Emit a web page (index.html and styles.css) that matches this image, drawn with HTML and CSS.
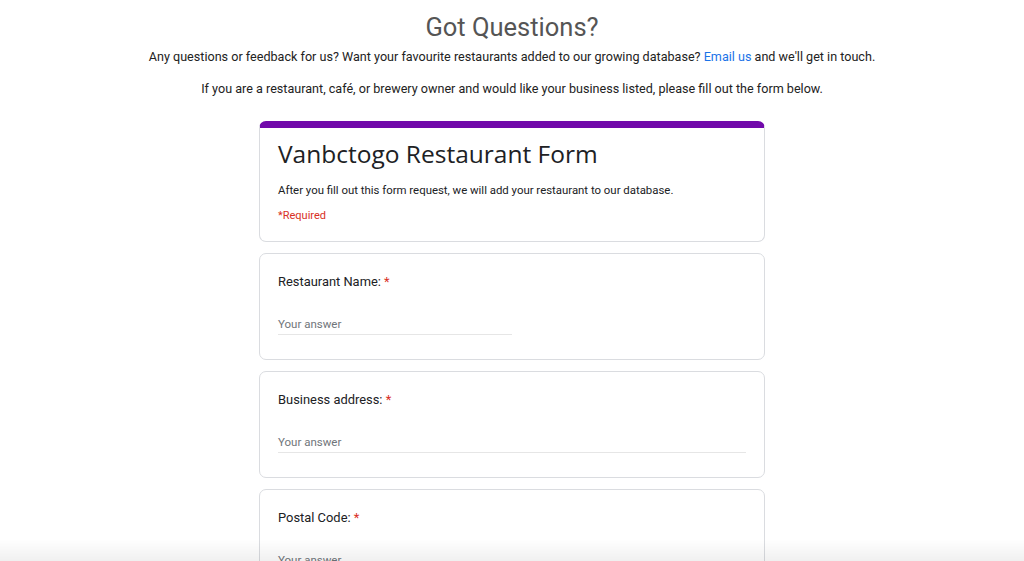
FILE: index.html
```html
<!DOCTYPE html>
<html lang="en">
<head>
    <meta charset="UTF-8">
    <meta name="viewport" content="width=device-width, initial-scale=1.0">
    <title>Got Questions?</title>
    <link rel="stylesheet" href="styles.css">
</head>
<body>
    <section class="contact">
        <h1>Got Questions?</h1>
        <p>Any questions or feedback for us? Want your favourite restaurants added to our growing database? <a href="#">Email us</a> and we'll get in touch.</p>
        <p>If you are a restaurant, café, or brewery owner and would like your business listed, please fill out the form below.</p>
    </section>

    <main class="form">
        <div class="card card-header">
            <h2>Vanbctogo Restaurant Form</h2>
            <p class="form-desc">After you fill out this form request, we will add your restaurant to our database.</p>
            <p class="required-note">*Required</p>
        </div>

        <div class="card question">
            <label class="q-label">Restaurant Name: <span class="star">*</span></label>
            <div class="answer half">Your answer</div>
        </div>

        <div class="card question">
            <label class="q-label">Business address: <span class="star">*</span></label>
            <div class="answer">Your answer</div>
        </div>

        <div class="card question">
            <label class="q-label">Postal Code: <span class="star">*</span></label>
            <div class="answer half">Your answer</div>
        </div>
    </main>

    <div class="bottom-fade"></div>
</body>
</html>
```

FILE: styles.css
```css
body {
    font-family: Roboto, Arial, sans-serif;
    margin: 0;
    padding: 0;
    background-color: #fff;
    color: #202124;
}
.contact {
    text-align: center;
    padding-top: 12px;
}
.contact h1 {
    font-size: 25.5px;
    font-weight: 400;
    color: #555;
    margin: 0 0 7px;
    line-height: 30px;
}
.contact p {
    font-size: 12.6px;
    line-height: 16px;
    margin: 0 0 16px;
    color: #222;
}
.contact a {
    color: #1a73e8;
    text-decoration: none;
}
.form {
    width: 506px;
    margin: 24px auto 0;
    display: flex;
    flex-direction: column;
    gap: 11px;
}
.card {
    border: 1px solid #dadce0;
    border-radius: 7px;
    background: #fff;
    padding: 19px 18px 20px;
}
.card-header {
    border-top: 7px solid #7109aa;
    padding-top: 11px;
    padding-bottom: 18px;
}
.card-header h2 {
    font-family: "Open Sans", Roboto, sans-serif;
    font-size: 24.5px;
    font-weight: 400;
    margin: 0;
    line-height: 30px;
    color: #202124;
}
.form-desc {
    font-size: 11.4px;
    margin: 14px 0 0;
    line-height: 14px;
}
.required-note {
    font-size: 11px;
    color: #d93025;
    margin: 12px 0 0;
    line-height: 14px;
}
.question {
    padding: 20px 18px 24px;
}
.q-label {
    display: block;
    font-size: 12.9px;
    line-height: 16px;
}
.star {
    color: #d93025;
}
.answer {
    margin-top: 27px;
    font-size: 11.5px;
    color: #70757a;
    padding-bottom: 3px;
    border-bottom: 1px solid #e6e6e6;
}
.half {
    width: 50%;
}
.bottom-fade {
    position: fixed;
    left: 0;
    right: 0;
    bottom: 0;
    height: 22px;
    background: linear-gradient(rgba(0, 0, 0, 0), rgba(0, 0, 0, 0.06));
    pointer-events: none;
}
```
